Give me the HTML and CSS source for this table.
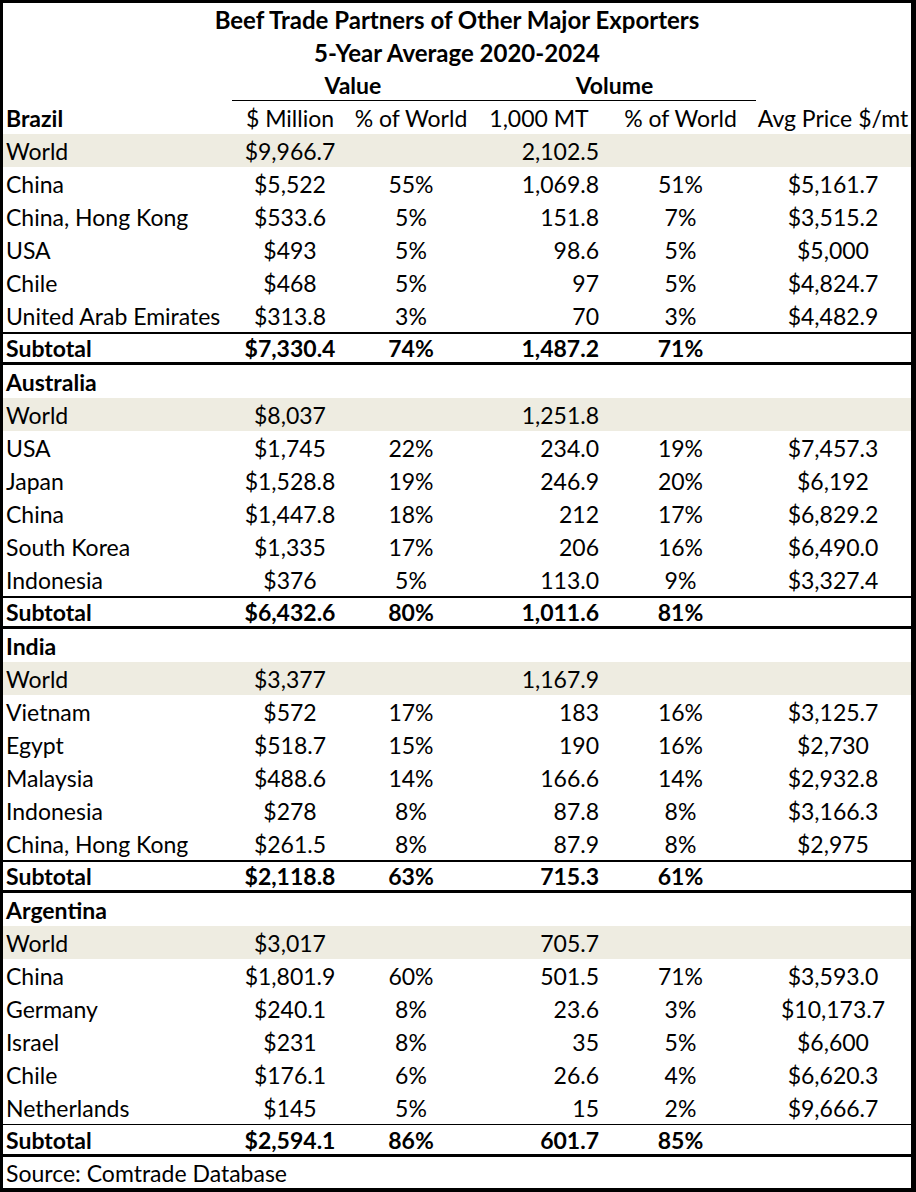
FILE: index.html
```html
<!DOCTYPE html>
<html lang="en">
<head>
<meta charset="utf-8">
<title>Beef Trade Partners of Other Major Exporters</title>
<link rel="stylesheet" href="styles.css">
</head>
<body>
<div class="sheet">
  <div class="title-row">Beef Trade Partners of Other Major Exporters</div>
  <div class="title-row">5-Year Average 2020-2024</div>
  <div class="group-row">
    <div class="c1"></div>
    <div class="group g-value">Value</div>
    <div class="group g-volume">Volume</div>
    <div class="c6"></div>
  </div>

  <section class="block">
    <div class="row head">
      <div class="c1">Brazil</div>
      <div class="c2 lbl">$ Million</div>
      <div class="c3 lbl">% of World</div>
      <div class="c4 lbl">1,000 MT</div>
      <div class="c5 lbl">% of World</div>
      <div class="c6 lbl">Avg Price $/mt</div>
    </div>
    <div class="row world"><div class="c1">World</div><div class="c2">$9,966.7</div><div class="c3"></div><div class="c4">2,102.5</div><div class="c5"></div><div class="c6"></div></div>
    <div class="row"><div class="c1">China</div><div class="c2">$5,522</div><div class="c3">55%</div><div class="c4">1,069.8</div><div class="c5">51%</div><div class="c6">$5,161.7</div></div>
    <div class="row"><div class="c1">China, Hong Kong</div><div class="c2">$533.6</div><div class="c3">5%</div><div class="c4">151.8</div><div class="c5">7%</div><div class="c6">$3,515.2</div></div>
    <div class="row"><div class="c1">USA</div><div class="c2">$493</div><div class="c3">5%</div><div class="c4">98.6</div><div class="c5">5%</div><div class="c6">$5,000</div></div>
    <div class="row"><div class="c1">Chile</div><div class="c2">$468</div><div class="c3">5%</div><div class="c4">97</div><div class="c5">5%</div><div class="c6">$4,824.7</div></div>
    <div class="row"><div class="c1">United Arab Emirates</div><div class="c2">$313.8</div><div class="c3">3%</div><div class="c4">70</div><div class="c5">3%</div><div class="c6">$4,482.9</div></div>
    <div class="row subtotal"><div class="c1">Subtotal</div><div class="c2">$7,330.4</div><div class="c3">74%</div><div class="c4">1,487.2</div><div class="c5">71%</div><div class="c6"></div></div>
  </section>

  <section class="block">
    <div class="row head"><div class="c1">Australia</div></div>
    <div class="row world"><div class="c1">World</div><div class="c2">$8,037</div><div class="c3"></div><div class="c4">1,251.8</div><div class="c5"></div><div class="c6"></div></div>
    <div class="row"><div class="c1">USA</div><div class="c2">$1,745</div><div class="c3">22%</div><div class="c4">234.0</div><div class="c5">19%</div><div class="c6">$7,457.3</div></div>
    <div class="row"><div class="c1">Japan</div><div class="c2">$1,528.8</div><div class="c3">19%</div><div class="c4">246.9</div><div class="c5">20%</div><div class="c6">$6,192</div></div>
    <div class="row"><div class="c1">China</div><div class="c2">$1,447.8</div><div class="c3">18%</div><div class="c4">212</div><div class="c5">17%</div><div class="c6">$6,829.2</div></div>
    <div class="row"><div class="c1">South Korea</div><div class="c2">$1,335</div><div class="c3">17%</div><div class="c4">206</div><div class="c5">16%</div><div class="c6">$6,490.0</div></div>
    <div class="row"><div class="c1">Indonesia</div><div class="c2">$376</div><div class="c3">5%</div><div class="c4">113.0</div><div class="c5">9%</div><div class="c6">$3,327.4</div></div>
    <div class="row subtotal"><div class="c1">Subtotal</div><div class="c2">$6,432.6</div><div class="c3">80%</div><div class="c4">1,011.6</div><div class="c5">81%</div><div class="c6"></div></div>
  </section>

  <section class="block">
    <div class="row head"><div class="c1">India</div></div>
    <div class="row world"><div class="c1">World</div><div class="c2">$3,377</div><div class="c3"></div><div class="c4">1,167.9</div><div class="c5"></div><div class="c6"></div></div>
    <div class="row"><div class="c1">Vietnam</div><div class="c2">$572</div><div class="c3">17%</div><div class="c4">183</div><div class="c5">16%</div><div class="c6">$3,125.7</div></div>
    <div class="row"><div class="c1">Egypt</div><div class="c2">$518.7</div><div class="c3">15%</div><div class="c4">190</div><div class="c5">16%</div><div class="c6">$2,730</div></div>
    <div class="row"><div class="c1">Malaysia</div><div class="c2">$488.6</div><div class="c3">14%</div><div class="c4">166.6</div><div class="c5">14%</div><div class="c6">$2,932.8</div></div>
    <div class="row"><div class="c1">Indonesia</div><div class="c2">$278</div><div class="c3">8%</div><div class="c4">87.8</div><div class="c5">8%</div><div class="c6">$3,166.3</div></div>
    <div class="row"><div class="c1">China, Hong Kong</div><div class="c2">$261.5</div><div class="c3">8%</div><div class="c4">87.9</div><div class="c5">8%</div><div class="c6">$2,975</div></div>
    <div class="row subtotal"><div class="c1">Subtotal</div><div class="c2">$2,118.8</div><div class="c3">63%</div><div class="c4">715.3</div><div class="c5">61%</div><div class="c6"></div></div>
  </section>

  <section class="block">
    <div class="row head"><div class="c1">Argentina</div></div>
    <div class="row world"><div class="c1">World</div><div class="c2">$3,017</div><div class="c3"></div><div class="c4">705.7</div><div class="c5"></div><div class="c6"></div></div>
    <div class="row"><div class="c1">China</div><div class="c2">$1,801.9</div><div class="c3">60%</div><div class="c4">501.5</div><div class="c5">71%</div><div class="c6">$3,593.0</div></div>
    <div class="row"><div class="c1">Germany</div><div class="c2">$240.1</div><div class="c3">8%</div><div class="c4">23.6</div><div class="c5">3%</div><div class="c6">$10,173.7</div></div>
    <div class="row"><div class="c1">Israel</div><div class="c2">$231</div><div class="c3">8%</div><div class="c4">35</div><div class="c5">5%</div><div class="c6">$6,600</div></div>
    <div class="row"><div class="c1">Chile</div><div class="c2">$176.1</div><div class="c3">6%</div><div class="c4">26.6</div><div class="c5">4%</div><div class="c6">$6,620.3</div></div>
    <div class="row"><div class="c1">Netherlands</div><div class="c2">$145</div><div class="c3">5%</div><div class="c4">15</div><div class="c5">2%</div><div class="c6">$9,666.7</div></div>
    <div class="row subtotal thin-top"><div class="c1">Subtotal</div><div class="c2">$2,594.1</div><div class="c3">86%</div><div class="c4">601.7</div><div class="c5">85%</div><div class="c6"></div></div>
  </section>

  <div class="row source"><div class="c1">Source: Comtrade Database</div></div>
</div>
</body>
</html>
```

FILE: styles.css
```css
html, body {
  margin: 0;
  padding: 0;
  background: #ffffff;
}

.sheet {
  box-sizing: border-box;
  width: 916px;
  height: 1192px;
  border-style: solid;
  border-color: #000000;
  border-width: 3px 5px 4px 3px;
  font-family: Lato, "Open Sans", "Liberation Sans", sans-serif;
  font-size: 23px;
  color: #000000;
  display: flex;
  flex-direction: column;
}

.title-row {
  height: 33px;
  display: flex;
  align-items: center;
  justify-content: center;
  font-weight: 700;
  font-size: 24px;
  white-space: nowrap;
}

.group-row {
  height: 32px;
  display: flex;
  font-weight: 700;
}

.group {
  box-sizing: border-box;
  display: flex;
  align-items: center;
  justify-content: center;
  border-bottom: 1px solid #000000;
}

.g-value { width: 242px; }
.g-volume { width: 283px; }

.block {
  display: flex;
  flex-direction: column;
}

.row {
  box-sizing: border-box;
  height: 33px;
  display: flex;
  align-items: center;
  white-space: nowrap;
}

.row > div {
  box-sizing: border-box;
  flex: none;
}

.c1 { width: 227px; padding-left: 3px; }
.c2 { width: 120px; text-align: center; }
.c3 { width: 122px; text-align: center; }
.c4 { width: 134px; text-align: right; padding-right: 7px; }
.c5 { width: 149px; text-align: center; }
.c6 { width: 156px; text-align: center; }

.group-row > .c1 { width: 227px; }
.group-row > .c6 { width: 156px; }

.head .c1 { font-weight: 700; }
.head .lbl { font-weight: 400; }
.head .c4.lbl { text-align: center; padding-right: 0; }

.world { background: #eeece1; }

.subtotal {
  font-weight: 700;
  border-top: 2px solid #000000;
  border-bottom: 3px solid #000000;
}

.subtotal.thin-top {
  border-top-width: 1px;
}

.source {
  height: 31px;
}
```
